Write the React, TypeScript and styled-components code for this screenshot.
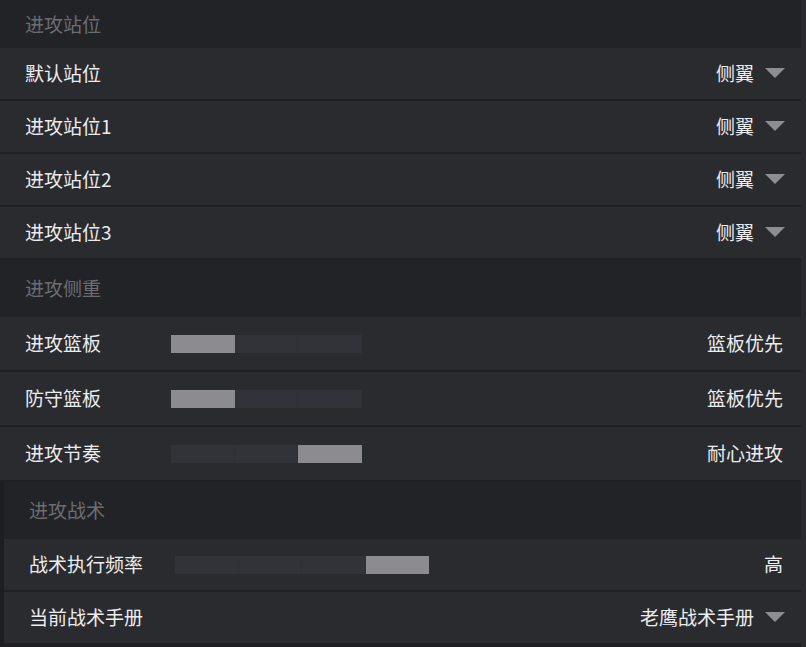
import styled, { createGlobalStyle } from 'styled-components';

const GlobalStyle = createGlobalStyle`
    html, body {
        margin: 0;
        padding: 0;
        background: #2b2b2e;
    }
    body {
        font-family: "Noto Sans CJK SC", "Noto Sans", sans-serif;
        -webkit-font-smoothing: antialiased;
    }
`;

type Row = {
    label: string;
    value: string;
    dropdown?: boolean;
    slider?: { steps: number; level: number };
};

type Section = {
    title: string;
    headerHeight: number;
    rowHeight: number;
    inset?: boolean;
    rows: Row[];
};

const sections: Section[] = [
    {
        title: '进攻站位',
        headerHeight: 48,
        rowHeight: 53,
        rows: [
            { label: '默认站位', value: '侧翼', dropdown: true },
            { label: '进攻站位1', value: '侧翼', dropdown: true },
            { label: '进攻站位2', value: '侧翼', dropdown: true },
            { label: '进攻站位3', value: '侧翼', dropdown: true }
        ]
    },
    {
        title: '进攻侧重',
        headerHeight: 57,
        rowHeight: 55,
        rows: [
            { label: '进攻篮板', value: '篮板优先', slider: { steps: 3, level: 0 } },
            { label: '防守篮板', value: '篮板优先', slider: { steps: 3, level: 0 } },
            { label: '进攻节奏', value: '耐心进攻', slider: { steps: 3, level: 2 } }
        ]
    },
    {
        title: '进攻战术',
        headerHeight: 57,
        rowHeight: 53,
        inset: true,
        rows: [
            { label: '战术执行频率', value: '高', slider: { steps: 4, level: 3 } },
            { label: '当前战术手册', value: '老鹰战术手册', dropdown: true }
        ]
    }
];

export default function App() {
    return (
        <>
            <GlobalStyle />
            <Page>
                {
                    sections.map(section => (
                        <Panel key={section.title} $inset={section.inset}>
                            <Header $height={section.headerHeight}>{section.title}</Header>
                            {
                                section.rows.map(row => (
                                    <RowItem key={row.label} $height={section.rowHeight}>
                                        <Label>{row.label}</Label>
                                        {
                                            row.slider ? <Track>
                                                {
                                                    Array.from({ length: row.slider.steps }).map((_, i) => (
                                                        <Segment key={i} $active={i === row.slider!.level} />
                                                    ))
                                                }
                                            </Track> : null
                                        }
                                        <Value>
                                            {row.value}
                                            {row.dropdown ? <Caret /> : null}
                                        </Value>
                                    </RowItem>
                                ))
                            }
                        </Panel>
                    ))
                }
            </Page>
        </>
    );
}

const Page = styled.div`
    width: 801px;
    height: 647px;
    display: flex;
    flex-direction: column;
    background: #1e1e21;
    overflow: hidden;
`;

const Panel = styled.div<{ $inset?: boolean }>`
    display: flex;
    flex-direction: column;
    margin-left: ${p => (p.$inset ? '4px' : '0')};
    background: #1f2023;
`;

const Header = styled.div<{ $height: number }>`
    height: ${p => p.$height}px;
    display: flex;
    align-items: center;
    padding-left: 25px;
    padding-bottom: 2px;
    box-sizing: border-box;
    background: #222326;
    color: #6c6d71;
    font-size: 19px;
`;

const RowItem = styled.div<{ $height: number }>`
    height: ${p => p.$height - 2}px;
    margin-bottom: 2px;
    display: flex;
    align-items: center;
    padding: 0 18px 3px 25px;
    box-sizing: border-box;
    background: #2a2b2f;
    color: #ececee;
    font-size: 19px;
`;

const Label = styled.div`
    width: 146px;
    flex-shrink: 0;
    white-space: nowrap;
`;

const Track = styled.div`
    display: flex;
    height: 18px;
    margin-top: 3px;
    background: #323338;
`;

const Segment = styled.div<{ $active: boolean }>`
    width: 63.5px;
    box-sizing: border-box;
    background: ${p => (p.$active ? '#8b8b90' : '#323338')};
    border-right: 1px solid ${p => (p.$active ? '#8b8b90' : '#2f3035')};
`;

const Value = styled.div`
    margin-left: auto;
    display: flex;
    align-items: center;
    gap: 11px;
    white-space: nowrap;
`;

const Caret = styled.span`
    width: 0;
    height: 0;
    margin-top: 2px;
    margin-right: -2px;
    border-left: 10px solid transparent;
    border-right: 10px solid transparent;
    border-top: 10px solid #8d8d92;
`;
